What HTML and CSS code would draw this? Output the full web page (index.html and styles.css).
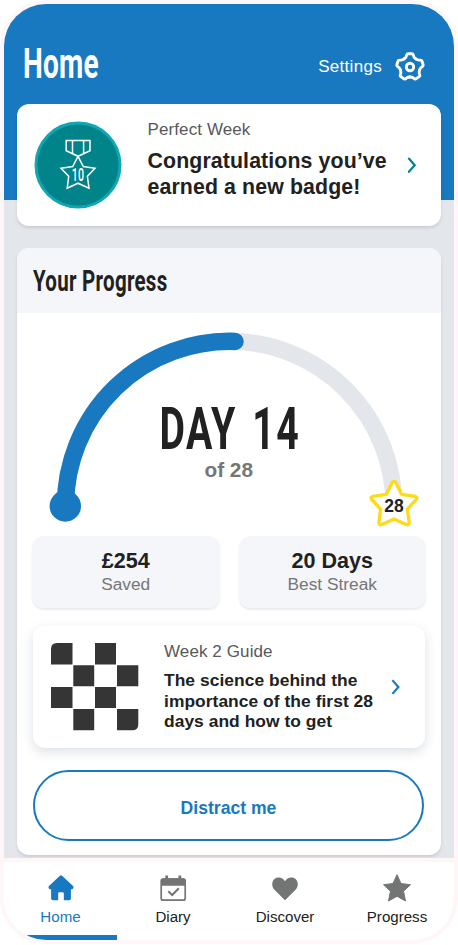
FILE: index.html
```html
<!DOCTYPE html>
<html lang="en">
<head>
<meta charset="utf-8">
<title>Home</title>
<link rel="stylesheet" href="styles.css">
</head>
<body>
<div class="phone">
  <main class="screen">
    <header class="header">
      <h1 class="title"><svg width="110" height="54" viewBox="0 0 110 54"><text class="din din-white" x="0" y="41.500" font-size="43" textLength="76" lengthAdjust="spacingAndGlyphs">Home</text></svg></h1>
      <a class="settings"><span>Settings</span>
        <svg width="32" height="32" viewBox="-16 -16 32 32" fill="none" stroke="#fff" stroke-width="2.900" stroke-linecap="round" stroke-linejoin="round">
          <defs><path id="tooth" d="M-5.900-8.100Q-4.300-9.300-3.800-10.600L-3.300-12.100Q-2.900-13.200-1.700-13.200H1.700Q2.900-13.200 3.300-12.100L3.800-10.600Q4.300-9.300 5.900-8.100"/></defs>
          <use href="#tooth"/><use href="#tooth" transform="rotate(72)"/><use href="#tooth" transform="rotate(144)"/><use href="#tooth" transform="rotate(216)"/><use href="#tooth" transform="rotate(288)"/>
          <circle r="3.700"/>
        </svg>
      </a>
    </header>

    <section class="card award">
      <svg class="medal" width="88" height="88" viewBox="0 0 88 88">
        <circle cx="44" cy="44" r="42" fill="#008489" stroke="#10a6b4" stroke-width="3"/>
        <g fill="none" stroke="#fff" stroke-width="1.500">
          <path d="M32.200 19.500H56V29.800L44 35.300L32.200 29.800ZM38.500 19.500V32.500M49.600 19.500V32.500"/>
          <path d="M44 35.300L49.300 45.500L61 47.200L53.400 55.300L55 67.200L44 62.200L33.200 67.200L34.700 55.300L27 47.200L38.700 45.500Z"/>
        </g>
        <text class="din din-white medal-number" x="37.800" y="59.700" font-size="18" textLength="12.500" lengthAdjust="spacingAndGlyphs">10</text>
      </svg>
      <div class="award-copy">
        <p class="label">Perfect Week</p>
        <h2 class="award-title">Congratulations you’ve<br>earned a new badge!</h2>
      </div>
      <svg class="chevron" width="10" height="18" viewBox="0 0 10 18"><path d="M1.900 2.600L7.700 9.200L1.900 15.800" fill="none" stroke="#00858c" stroke-width="2.200" stroke-linecap="round"/></svg>
    </section>

    <section class="card progress">
      <div class="progress-head">
        <h2 class="heading"><svg width="220" height="44" viewBox="0 0 220 44"><text class="din" x="0" y="32" font-size="30" textLength="134.500" lengthAdjust="spacingAndGlyphs">Your Progress</text></svg></h2>
      </div>
      <svg class="gauge" width="424" height="222" viewBox="17 313 424 222">
        <path d="M65.500 505.500A164.200 164.200 0 0 1 393.900 505.500" fill="none" stroke="#e3e6eb" stroke-width="17"/>
        <path d="M65.500 505.500A164.200 164.200 0 0 1 235 341.400" fill="none" stroke="#1879c1" stroke-width="17.500" stroke-linecap="round"/>
        <circle cx="65.300" cy="506" r="15.700" fill="#1879c1"/>
        <text class="din day" x="159.500" y="449.300" font-size="59" textLength="140.500" lengthAdjust="spacingAndGlyphs">DAY 14</text>
        <text class="sans" x="228.700" y="476.500" font-size="20.800" text-anchor="middle" fill="#757776">of 28</text>
        <path d="M392.300 482.300Q394 480.300 395.700 482.300L401.600 494.300L415.400 496.400Q418 497.500 416.300 499.500L407.300 509.100L409.200 522.500Q409 525.500 406.200 524.500L394 519L381.800 524.500Q379 525.500 378.800 522.500L380.700 509.100L371.700 499.500Q370 497.500 372.600 496.400L386.400 494.300Z" fill="#fff" stroke="#fedb16" stroke-width="3.300" stroke-linejoin="round"/>
        <text class="sans" x="394" y="511.800" font-size="17.500" text-anchor="middle" fill="#212121">28</text>
      </svg>
      <div class="stats">
        <div class="stat"><strong>£254</strong><span>Saved</span></div>
        <div class="stat"><strong>20 Days</strong><span>Best Streak</span></div>
      </div>
      <article class="guide">
        <svg class="checker" width="88" height="88" viewBox="0 0 88 88" fill="#353535"><path d="M6 0H21.500V21.500H0V6Q0 0 6 0ZM44 0H65V21.500H44ZM22.300 22.300H43.200V43.200H22.300ZM66 22.300H87.300V43.200H66ZM0 44H21.500V65H0ZM44 44H65V65H44ZM22.300 66H43.200V87.300H22.300ZM66 66H87.300V81.300Q87.300 87.300 81.300 87.300H66Z"/></svg>
        <div class="guide-copy">
          <p class="label">Week 2 Guide</p>
          <h3 class="guide-title">The science behind the<br>importance of the first 28<br>days and how to get</h3>
        </div>
        <svg class="chevron guide-chevron" width="10" height="18" viewBox="0 0 10 18"><path d="M1.400 2.100L7.400 9L1.400 15.900" fill="none" stroke="#1879c1" stroke-width="2.200"/></svg>
      </article>
      <button class="distract">Distract me</button>
    </section>
  </main>

  <nav class="tabs">
    <a class="tab active">
      <svg width="28" height="28" viewBox="0 0 28 28" fill="#1879c1"><path d="M12.900 1.800Q14 .9 15.100 1.800L26.300 12.300Q27.300 14.200 25.300 15.200H23.900V24.600Q23.900 26.300 22.200 26.300H16.800V19.600Q16.800 18.200 15.500 18.200H12.500Q11.200 18.200 11.200 19.600V26.300H5.800Q4.100 26.300 4.100 24.600V15.200H2.700Q.7 14.200 1.700 12.300Z"/></svg>
      <span>Home</span>
    </a>
    <a class="tab">
      <svg width="28" height="28" viewBox="0 0 28 28"><rect x="2.200" y="5" width="24" height="21.200" rx="2" fill="#fff" stroke="#737574" stroke-width="1.700"/><path d="M2 11.800V6.500Q2 4.200 4.500 4.200H24Q26.400 4.200 26.400 6.500V11.800Z" fill="#737574"/><path d="M7.700 1.500V5M20.800 1.500V5" stroke="#737574" stroke-width="2.800"/><path d="M9.300 17.300L13.200 21L19.800 14.300" fill="none" stroke="#737574" stroke-width="2"/></svg>
      <span>Diary</span>
    </a>
    <a class="tab">
      <svg width="28" height="28" viewBox="0 0 28 28" fill="#737574"><path d="M14 26.300L3.200 15.400C-.3 11.600 1 5.500 5.500 3.800C8.800 2.700 12.300 3.900 14 7.200C15.700 3.900 19.200 2.700 22.500 3.800C27 5.500 28.300 11.600 24.800 15.400Z"/></svg>
      <span>Discover</span>
    </a>
    <a class="tab">
      <svg width="28" height="28" viewBox="0 0 28 28" fill="#737574" stroke="#737574" stroke-width="1" stroke-linejoin="round"><path d="M14 .7L18 9.500L27.500 10.700L20.500 17.300L22.500 27L14 22.300L5.500 27L7.500 17.300L.5 10.700L10 9.500Z"/></svg>
      <span>Progress</span>
    </a>
  </nav>
</div>
</body>
</html>
```

FILE: styles.css
```css
* { box-sizing: border-box; }
body { margin: 0; background: #fff; font-family: "Liberation Sans", sans-serif; color: #212121; }
h1, h2, h3, p { margin: 0; }
svg { display: block; flex: none; }
.din { font-family: Roboto, sans-serif; font-weight: 700; fill: #212121; letter-spacing: .4px; }
.din-white { fill: #fff; }
.day { letter-spacing: 2px; word-spacing: 7px; }
.medal-number { font-weight: 500; }
.sans { font-family: "Liberation Sans", sans-serif; font-weight: 700; }

.phone { width: 458px; height: 944px; border: 4px solid #fff7f7; border-radius: 46px; overflow: hidden; display: flex; flex-direction: column; background: #fff; }
.screen { height: 854px; padding: 0 13px; background: linear-gradient(#1879c1 196px, #e3e6eb 196px); overflow: hidden; }
.header { height: 100px; padding: 32px 15px 0 6px; display: flex; justify-content: space-between; align-items: flex-start; }
.settings { display: flex; align-items: center; gap: 12px; margin-top: 15px; color: #fff; font-size: 17px; letter-spacing: .3px; }

.card { background: #fff; border-radius: 12px; box-shadow: 0 2px 3px rgba(40, 60, 80, .14); }
.award { height: 122px; padding: 17px 24px 0 17px; display: flex; }
.award-copy { margin-left: 25.500px; flex: 1; white-space: nowrap; }
.label { font-size: 17px; line-height: 20px; color: #58595b; letter-spacing: .1px; margin-top: -1px; }
.award-title { font-size: 21.300px; line-height: 26px; margin-top: 8px; letter-spacing: .12px; }
.chevron { margin-top: 35px; }

.progress { height: 607px; margin-top: 22px; overflow: hidden; }
.progress-head { height: 65px; padding: 11px 16px 0; background: #f4f6fa; }
.stats { display: flex; gap: 19px; padding: 0 15px; margin-top: 1px; }
.stat { flex: 1; height: 72px; border-radius: 12px; background: #f4f6fa; box-shadow: 0 2px 2px rgba(40, 70, 90, .1); display: flex; flex-direction: column; align-items: center; padding-top: 13px; }
.stat strong { font-size: 21.500px; line-height: 24px; }
.stat span { font-size: 17.300px; line-height: 22px; color: #757776; }
.guide { height: 122px; margin: 18px 16px 0; padding: 17px 24px 0 18px; border-radius: 12px; background: #fff; box-shadow: 0 4px 12px rgba(40, 60, 85, .16); display: flex; }
.guide-copy { margin-left: 25px; flex: 1; white-space: nowrap; }
.guide-title { font-size: 17.400px; line-height: 20.700px; margin-top: 8px; letter-spacing: .05px; }
.distract { display: block; width: 391px; height: 71px; margin: 22px 16px 0; padding: 5px 0 0; border: 2px solid #1879c1; border-radius: 36px; background: #fff; color: #1879c1; font: 700 17.600px "Liberation Sans", sans-serif; }

.tabs { height: 82px; border-top: 4px solid #fff7f7; display: flex; background: #fff; }
.tab { width: 112px; display: flex; flex-direction: column; align-items: center; padding-top: 12px; font-size: 15.100px; }
.tab span { margin-top: 5px; line-height: 20px; }
.active { width: 113px; color: #1879c1; border-bottom: 5px solid #1879c1; }
```
